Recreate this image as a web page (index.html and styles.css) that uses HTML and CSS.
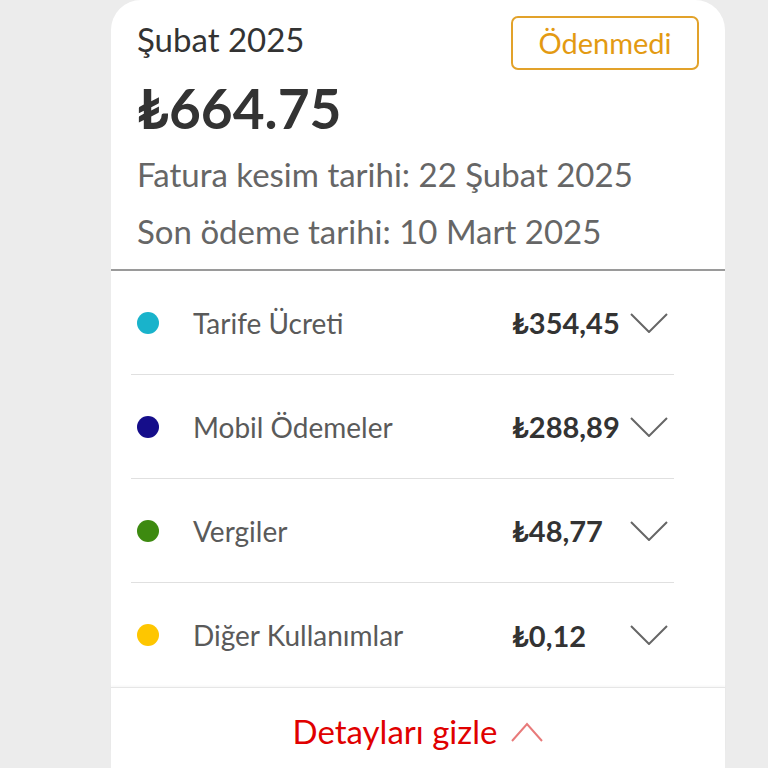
FILE: index.html
```html
<!DOCTYPE html>
<html lang="tr">
<head>
<meta charset="utf-8">
<link rel="stylesheet" href="styles.css">
</head>
<body>
<div class="card">
  <div class="head">
    <div class="head-top">
      <div class="month">Şubat 2025</div>
      <span class="badge">Ödenmedi</span>
    </div>
    <div class="total">₺664.75</div>
    <div class="meta">Fatura kesim tarihi: 22 Şubat 2025</div>
    <div class="meta">Son ödeme tarihi: 10 Mart 2025</div>
  </div>
  <ul class="items">
    <li class="row">
      <span class="dot dot-cyan"></span>
      <span class="label">Tarife Ücreti</span>
      <span class="amount">₺354,45</span>
      <svg class="chev" viewBox="0 0 38 20" width="38" height="20"><polyline points="1,1 19,19 37,1" fill="none" stroke="#666" stroke-width="2"/></svg>
    </li>
    <li class="row">
      <span class="dot dot-navy"></span>
      <span class="label">Mobil Ödemeler</span>
      <span class="amount">₺288,89</span>
      <svg class="chev" viewBox="0 0 38 20" width="38" height="20"><polyline points="1,1 19,19 37,1" fill="none" stroke="#666" stroke-width="2"/></svg>
    </li>
    <li class="row">
      <span class="dot dot-green"></span>
      <span class="label">Vergiler</span>
      <span class="amount">₺48,77</span>
      <svg class="chev" viewBox="0 0 38 20" width="38" height="20"><polyline points="1,1 19,19 37,1" fill="none" stroke="#666" stroke-width="2"/></svg>
    </li>
    <li class="row">
      <span class="dot dot-yellow"></span>
      <span class="label">Diğer Kullanımlar</span>
      <span class="amount">₺0,12</span>
      <svg class="chev" viewBox="0 0 38 20" width="38" height="20"><polyline points="1,1 19,19 37,1" fill="none" stroke="#666" stroke-width="2"/></svg>
    </li>
  </ul>
  <div class="foot">
    <span class="foot-text">Detayları gizle</span>
    <svg class="chev-up" viewBox="0 0 32 20" width="32" height="20"><polyline points="1,19 16,2 31,19" fill="none" stroke="#e87a7a" stroke-width="2"/></svg>
  </div>
</div>
</body>
</html>
```

FILE: styles.css
```css
html, body {
  margin: 0;
  padding: 0;
  background: #ececec;
  height: 768px;
  overflow: hidden;
}
body {
  font-family: Lato, "Noto Sans", sans-serif;
}
.card {
  margin-left: 111px;
  width: 614px;
  height: 800px;
  background: #fff;
  border-radius: 30px 30px 0 0;
}
.head {
  box-sizing: border-box;
  padding: 16px 26px 0 26px;
  height: 271px;
  border-bottom: 2px solid #9a9a9a;
}
.head-top {
  display: flex;
  justify-content: space-between;
  align-items: flex-start;
}
.month {
  margin-top: 3px;
  font-size: 33px;
  line-height: 40px;
  color: #333;
}
.badge {
  box-sizing: border-box;
  height: 54px;
  width: 188px;
  border: 2px solid #e2a22a;
  border-radius: 7px;
  color: #e39a12;
  font-size: 29px;
  line-height: 50px;
  text-align: center;
}
.total {
  margin-top: 8px;
  font-size: 55px;
  font-weight: 700;
  line-height: 60px;
  color: #333;
}
.meta {
  font-size: 33px;
  line-height: 57px;
  color: #666;
}
.total + .meta {
  margin-top: 8px;
}
.items {
  list-style: none;
  margin: 0 51px 0 20px;
  padding: 0;
}
.row {
  display: flex;
  align-items: center;
  height: 103px;
  padding-left: 6px;
  border-bottom: 1px solid #e0e0e0;
}
.row:last-child {
  border-bottom: none;
  height: 104px;
}
.dot {
  width: 22px;
  height: 22px;
  border-radius: 50%;
  flex: none;
}
.dot-cyan { background: #19b3cb; }
.dot-navy { background: #150d8a; }
.dot-green { background: #3d8a10; }
.dot-yellow { background: #fec600; }
.label {
  flex: 1;
  margin-left: 34px;
  font-size: 28px;
  color: #5a5a5a;
}
.amount {
  width: 118px;
  font-size: 29px;
  font-weight: 700;
  color: #333;
}
.chev {
  flex: none;
  margin-right: 6px;
}
.foot {
  border-top: 1px solid #e6e6e6;
  box-shadow: 0 -1px 2px rgba(0,0,0,0.04);
  display: flex;
  justify-content: center;
  align-items: center;
  gap: 14px;
  padding-top: 23px;
}
.foot-text {
  font-size: 33px;
  line-height: 40px;
  color: #e00000;
}
.chev-up {
  margin-top: 2px;
}
```
